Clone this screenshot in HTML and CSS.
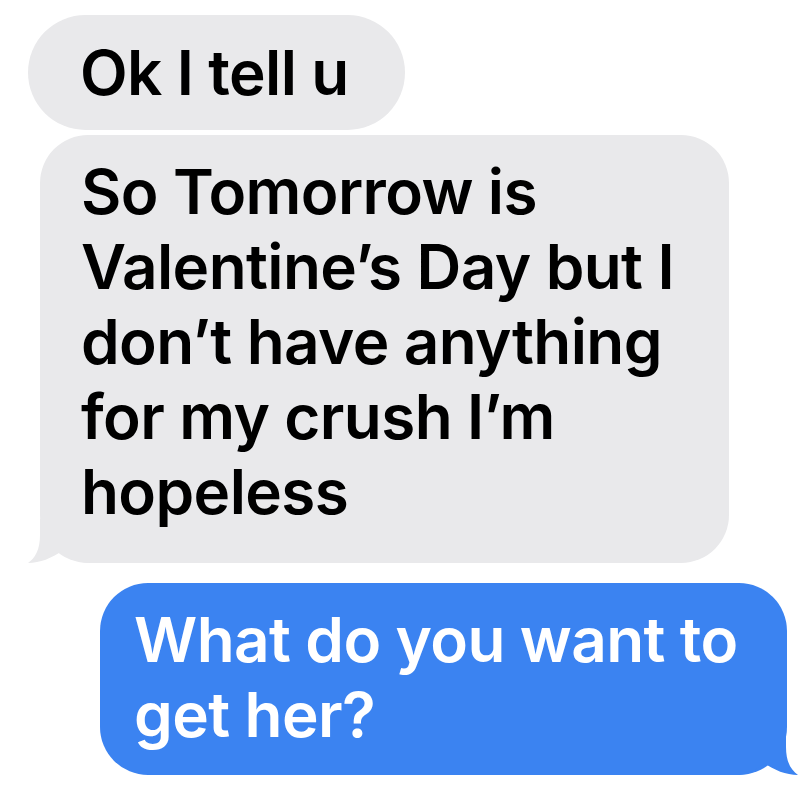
FILE: index.html
```html
<!DOCTYPE html>
<html lang="en">
<head>
<meta charset="utf-8">
<title>Messages</title>
<link rel="stylesheet" href="styles.css">
</head>
<body>
<main class="thread">
  <div class="bubble them first">Ok I tell u</div>
  <div class="bubble them second">So Tomorrow is<br>Valentine’s Day but I<br>don’t have anything<br>for my crush I’m<br>hopeless<svg class="tail" width="62" height="44" viewBox="0 0 62 44"><path d="M12 0 L12 16 C12 31 7 39 0 44 C12 44 24 39 34 32 C40 38 48 43 62 44 L62 0 Z"/></svg></div>
  <div class="bubble me">What do you want to<br>get her?<svg class="tail" width="62" height="44" viewBox="0 0 62 44"><path d="M12 0 L12 16 C12 31 7 39 0 44 C12 44 24 39 34 32 C40 38 48 43 62 44 L62 0 Z"/></svg></div>
</main>
</body>
</html>
```
FILE: styles.css
```css
html, body {
  margin: 0;
  padding: 0;
  background: #ffffff;
}
body {
  width: 809px;
  height: 791px;
  overflow: hidden;
}
.thread {
  display: flex;
  flex-direction: column;
  padding-top: 15px;
}
.bubble {
  position: relative;
  box-sizing: border-box;
  font-family: "Inter", "Liberation Sans", sans-serif;
  font-weight: 600;
  font-size: 62px;
  line-height: 75px;
  letter-spacing: -0.6px;
  white-space: nowrap;
}
.them {
  background: #e9e9eb;
  color: #000000;
}
.first {
  margin-left: 28px;
  width: 377px;
  height: 115px;
  border-radius: 58px;
  padding: 20px 0 0 52px;
}
.second {
  margin-top: 5px;
  margin-left: 40px;
  width: 689px;
  height: 428px;
  border-radius: 48px;
  padding: 19px 0 0 41px;
}
.me {
  margin-top: 20px;
  margin-left: 100px;
  width: 687px;
  height: 192px;
  border-radius: 48px;
  padding: 19px 0 0 34px;
  background: #3b83f1;
  color: #ffffff;
}
.tail {
  position: absolute;
  bottom: 0;
  left: -12px;
  display: block;
}
.second .tail path { fill: #e9e9eb; }
.me .tail {
  left: auto;
  right: -11px;
  transform: scaleX(-1);
}
.me .tail path { fill: #3b83f1; }
```
